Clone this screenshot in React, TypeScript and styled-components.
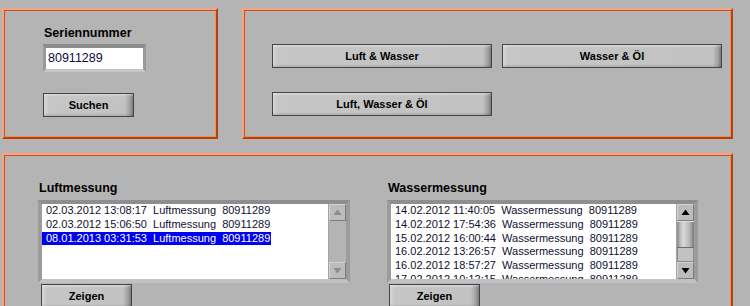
import React from "react";
import styled, { createGlobalStyle } from "styled-components";

const Global = createGlobalStyle`
  html, body { margin: 0; padding: 0; background: #b4b4b4; overflow: hidden; }
  body { font-family: "Liberation Sans", Arial, sans-serif; }
`;

const Page = styled.div`
  width: 750px;
  height: 306px;
  padding: 8px 0 0 2px;
  box-sizing: border-box;
  display: flex;
  flex-direction: column;
  gap: 14px;
`;

const TopRow = styled.div`
  display: flex;
  gap: 24px;
`;

const Panel = styled.section<{ $w: number; $h: number }>`
  box-sizing: border-box;
  width: ${(p) => p.$w}px;
  height: ${(p) => p.$h}px;
  border: 2px solid;
  border-color: #f8a47c #b0440f #b0440f #f8a47c;
  box-shadow: inset 1px 1px 0 #c4521a, inset -1px -1px 0 #ff8a52;
  flex-shrink: 0;
`;

const SearchPanel = styled(Panel)`
  padding: 16px 0 0 39px;
  display: flex;
  flex-direction: column;
  align-items: flex-start;
`;

const Label = styled.div`
  font-weight: bold;
  font-size: 12.5px;
  line-height: 15px;
  color: #000;
  padding-left: 1px;
`;

const Input = styled.div`
  box-sizing: border-box;
  width: 103px;
  height: 28px;
  margin-top: 3px;
  border-style: solid;
  border-width: 4px 3px 3px 3px;
  border-color: #8c8c8c #9a9a9a #c6c6c6 #9a9a9a;
  background: #fff;
  font-size: 12.5px;
  line-height: 20px;
  color: #0c0c38;
  padding-left: 2px;
`;

const Button = styled.button<{ $w: number }>`
  box-sizing: border-box;
  width: ${(p) => p.$w}px;
  height: 24px;
  margin: 0;
  padding: 0;
  border: 1px solid #444;
  background:
    linear-gradient(to bottom, rgba(255,255,255,0.35) 0, rgba(255,255,255,0) 3px, rgba(0,0,0,0) calc(100% - 3px), rgba(0,0,0,0.12) 100%),
    linear-gradient(to right, #d6d6d6 0, #c6c6c6 5px, #c2c2c2 calc(100% - 8px), #a0a0a0 calc(100% - 3px), #7a7a7a 100%);
  font-family: "Liberation Sans", Arial, sans-serif;
  font-weight: bold;
  font-size: 11px;
  color: #000;
  display: flex;
  align-items: center;
  justify-content: center;
  flex-shrink: 0;
`;

const SearchButton = styled(Button)`
  margin-top: 21px;
`;

const ChoicePanel = styled(Panel)`
  padding: 34px 0 0 28px;
  display: grid;
  grid-template-columns: 220px 220px;
  grid-auto-rows: 24px;
  column-gap: 10px;
  row-gap: 24px;
  align-content: start;
`;

const ListPanel = styled(Panel)`
  padding: 26px 0 0 34px;
  display: flex;
  gap: 37px;
  align-items: flex-start;
`;

const Column = styled.div`
  display: flex;
  flex-direction: column;
  align-items: flex-start;
`;

const ListFrame = styled.div<{ $w: number }>`
  box-sizing: border-box;
  width: ${(p) => p.$w}px;
  height: 83px;
  margin-top: 4px;
  border-style: solid;
  border-width: 4px;
  border-color: #8e8e8e #9c9c9c #c2c2c2 #9c9c9c;
  background: #a4a4a4;
  display: flex;
  gap: 1px;
`;

const ListBody = styled.div`
  flex: 1;
  background: #fff;
  overflow: hidden;
  font-size: 11px;
  line-height: 13.75px;
  color: #101030;
`;

const Row = styled.div<{ $sel?: boolean }>`
  display: block;
  width: fit-content;
  white-space: pre;
  padding: 0 1px 0 4px;
  background: ${(p) => (p.$sel ? "#0000f0" : "transparent")};
  color: ${(p) => (p.$sel ? "#fff" : "inherit")};
`;

const Scroll = styled.div`
  width: 17px;
  display: flex;
  flex-direction: column;
  background: #b4b4b4;
`;

const Arrow = styled.div`
  box-sizing: border-box;
  height: 17px;
  border: 1px solid;
  border-color: #d2d2d2 #7c7c7c #7c7c7c #d2d2d2;
  background: #bcbcbc;
  display: flex;
  align-items: center;
  justify-content: center;
  flex-shrink: 0;
`;

const Track = styled.div`
  flex: 1;
  display: flex;
  flex-direction: column;
`;

const Thumb = styled.div`
  height: 27px;
  box-sizing: border-box;
  border-top: 1px solid #e0e0e0;
  border-bottom: 1px solid #6c6c6c;
  background: linear-gradient(to right, #8a8a8a 0, #c8c8c8 25%, #d8d8d8 40%, #b4b4b4 75%, #7c7c7c 100%);
`;

const TrackRest = styled.div`
  flex: 1;
  background: #c2c2c2;
  border: 1px solid #8c8c8c;
  border-width: 0 1px 1px 1px;
`;

const Zeigen = styled(Button)`
  margin: 1px 0 0 3px;
`;

const ZeigenRight = styled(Button)`
  margin: 1px 0 0 2px;
`;

const Tri = ({ up, color }: { up: boolean; color: string }) => (
  <svg width="9" height="7" viewBox="0 0 9 7">
    {up ? (
      <polygon points="4.5,0.5 8.5,6 0.5,6" fill={color} />
    ) : (
      <polygon points="0.5,1 8.5,1 4.5,6.5" fill={color} />
    )}
  </svg>
);

const luft = [
  "02.03.2012 13:08:17  Luftmessung  80911289",
  "02.03.2012 15:06:50  Luftmessung  80911289",
  "08.01.2013 03:31:53  Luftmessung  80911289",
];

const wasser = [
  "14.02.2012 11:40:05  Wassermessung  80911289",
  "14.02.2012 17:54:36  Wassermessung  80911289",
  "15.02.2012 16:00:44  Wassermessung  80911289",
  "16.02.2012 13:26:57  Wassermessung  80911289",
  "16.02.2012 18:57:27  Wassermessung  80911289",
  "17.02.2012 10:12:15  Wassermessung  80911289",
];

export default function App() {
  return (
    <>
      <Global />
      <Page>
        <TopRow>
          <SearchPanel $w={216} $h={131}>
            <Label>Seriennummer</Label>
            <Input>80911289</Input>
            <SearchButton $w={91}>Suchen</SearchButton>
          </SearchPanel>
          <ChoicePanel $w={491} $h={131}>
            <Button $w={220}>Luft &amp; Wasser</Button>
            <Button $w={220}>Wasser &amp; Öl</Button>
            <Button $w={220}>Luft, Wasser &amp; Öl</Button>
          </ChoicePanel>
        </TopRow>
        <ListPanel $w={731} $h={170}>
          <Column>
            <Label>Luftmessung</Label>
            <ListFrame $w={312}>
              <ListBody>
                {luft.map((r, i) => (
                  <Row key={i} $sel={i === 2}>{r}</Row>
                ))}
              </ListBody>
              <Scroll>
                <Arrow><Tri up color="#8c8c8c" /></Arrow>
                <Track />
                <Arrow><Tri up={false} color="#8c8c8c" /></Arrow>
              </Scroll>
            </ListFrame>
            <Zeigen $w={91}>Zeigen</Zeigen>
          </Column>
          <Column>
            <Label>Wassermessung</Label>
            <ListFrame $w={311}>
              <ListBody>
                {wasser.map((r, i) => (
                  <Row key={i}>{r}</Row>
                ))}
              </ListBody>
              <Scroll>
                <Arrow><Tri up color="#000" /></Arrow>
                <Track>
                  <Thumb />
                  <TrackRest />
                </Track>
                <Arrow><Tri up={false} color="#000" /></Arrow>
              </Scroll>
            </ListFrame>
            <ZeigenRight $w={91}>Zeigen</ZeigenRight>
          </Column>
        </ListPanel>
      </Page>
    </>
  );
}
